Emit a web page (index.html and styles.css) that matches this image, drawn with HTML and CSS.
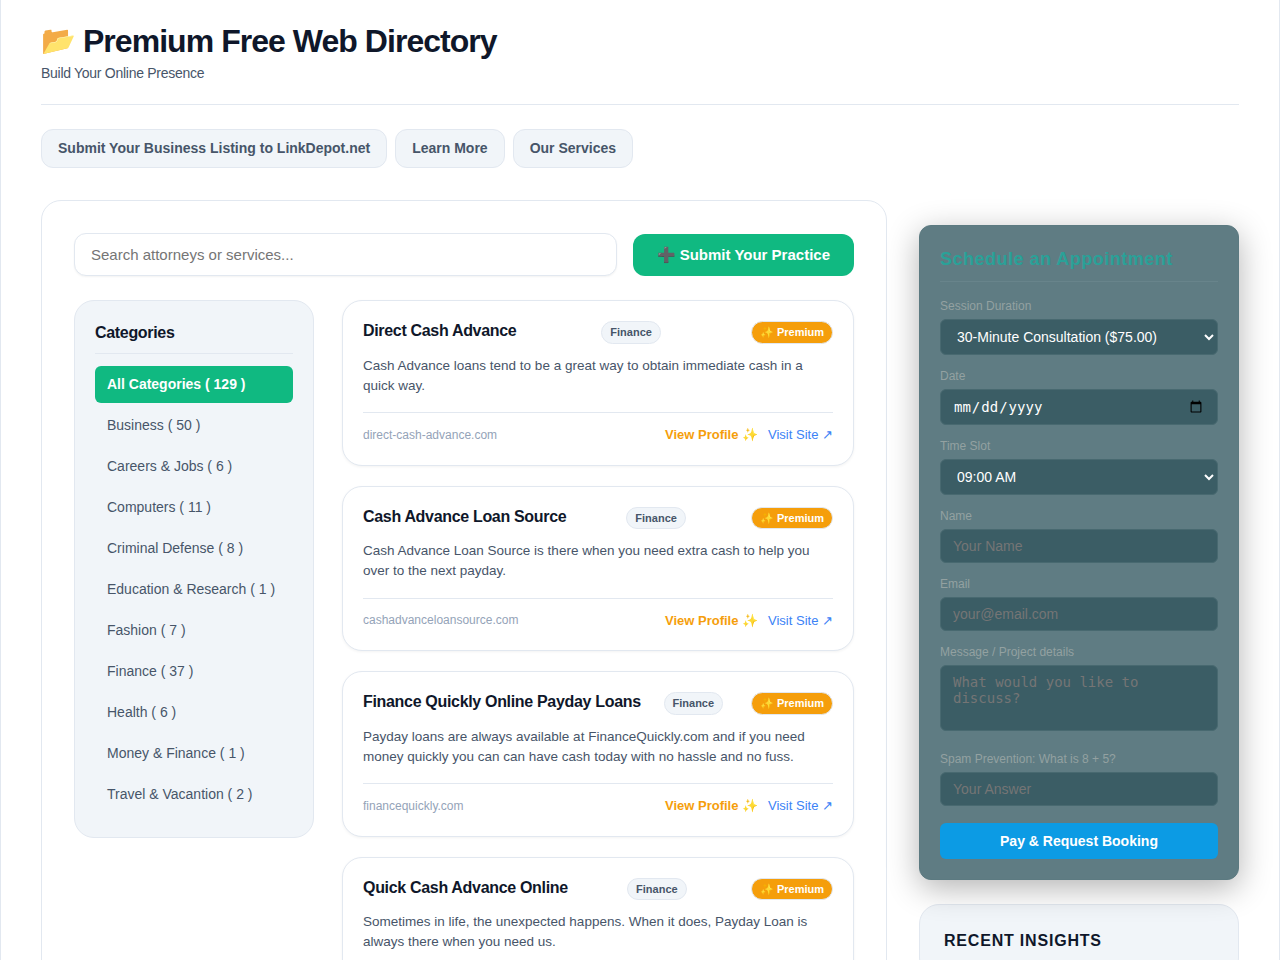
FILE: index.html
```html
<!DOCTYPE html>
<html lang="en">
<head>
    <meta charset="UTF-8">
    <meta name="viewport" content="width=device-width, initial-scale=1.0">
    <title>Premium Free Web Directory</title>
    <link rel="stylesheet" href="styles.css">
</head>
<body>
    <div class="container">
        <header class="site-header">
            <h1><span class="logo">📂</span> Premium Free Web Directory</h1>
            <p class="tagline">Build Your Online Presence</p>
        </header>
        <nav class="site-nav">
            <a href="#">Submit Your Business Listing to LinkDepot.net</a>
            <a href="#">Learn More</a>
            <a href="#">Our Services</a>
        </nav>

        <div class="layout">
            <main class="content">
                <div class="search-row">
                    <input type="text" class="search-input" placeholder="Search attorneys or services...">
                    <button class="btn-submit">➕ Submit Your Practice</button>
                </div>

                <div class="directory">
                    <div class="categories">
                        <h3>Categories</h3>
                        <ul>
                            <li><a href="#" class="active">All Categories ( 129 )</a></li>
                            <li><a href="#">Business ( 50 )</a></li>
                            <li><a href="#">Careers &amp; Jobs ( 6 )</a></li>
                            <li><a href="#">Computers ( 11 )</a></li>
                            <li><a href="#">Criminal Defense ( 8 )</a></li>
                            <li><a href="#">Education &amp; Research ( 1 )</a></li>
                            <li><a href="#">Fashion ( 7 )</a></li>
                            <li><a href="#">Finance ( 37 )</a></li>
                            <li><a href="#">Health ( 6 )</a></li>
                            <li><a href="#">Money &amp; Finance ( 1 )</a></li>
                            <li><a href="#">Travel &amp; Vacantion ( 2 )</a></li>
                        </ul>
                    </div>

                    <div class="listings">
                        <div class="card">
                            <div class="card-header">
                                <h2>Direct Cash Advance</h2>
                                <span class="badge">Finance</span>
                                <span class="badge premium">✨ Premium</span>
                            </div>
                            <p>Cash Advance loans tend to be a great way to obtain immediate cash in a quick way.</p>
                            <div class="card-footer">
                                <span class="domain">direct-cash-advance.com</span>
                                <div class="links">
                                    <a href="#" class="profile">View Profile ✨</a>
                                    <a href="#" class="visit">Visit Site ↗</a>
                                </div>
                            </div>
                        </div>
                        <div class="card">
                            <div class="card-header">
                                <h2>Cash Advance Loan Source</h2>
                                <span class="badge">Finance</span>
                                <span class="badge premium">✨ Premium</span>
                            </div>
                            <p>Cash Advance Loan Source is there when you need extra cash to help you over to the next payday.</p>
                            <div class="card-footer">
                                <span class="domain">cashadvanceloansource.com</span>
                                <div class="links">
                                    <a href="#" class="profile">View Profile ✨</a>
                                    <a href="#" class="visit">Visit Site ↗</a>
                                </div>
                            </div>
                        </div>
                        <div class="card">
                            <div class="card-header">
                                <h2>Finance Quickly Online Payday Loans</h2>
                                <span class="badge">Finance</span>
                                <span class="badge premium">✨ Premium</span>
                            </div>
                            <p>Payday loans are always available at FinanceQuickly.com and if you need money quickly you can can have cash today with no hassle and no fuss.</p>
                            <div class="card-footer">
                                <span class="domain">financequickly.com</span>
                                <div class="links">
                                    <a href="#" class="profile">View Profile ✨</a>
                                    <a href="#" class="visit">Visit Site ↗</a>
                                </div>
                            </div>
                        </div>
                        <div class="card">
                            <div class="card-header">
                                <h2>Quick Cash Advance Online</h2>
                                <span class="badge">Finance</span>
                                <span class="badge premium">✨ Premium</span>
                            </div>
                            <p>Sometimes in life, the unexpected happens. When it does, Payday Loan is always there when you need us.</p>
                        </div>
                    </div>
                </div>
            </main>

            <aside class="sidebar">
                <form class="booking">
                    <h3>Schedule an Appointment</h3>
                    <div class="field">
                        <label for="duration">Session Duration</label>
                        <select id="duration">
                            <option>30-Minute Consultation ($75.00)</option>
                        </select>
                    </div>
                    <div class="field">
                        <label for="date">Date</label>
                        <input type="date" id="date">
                    </div>
                    <div class="field">
                        <label for="slot">Time Slot</label>
                        <select id="slot">
                            <option>09:00 AM</option>
                        </select>
                    </div>
                    <div class="field">
                        <label for="name">Name</label>
                        <input type="text" id="name" placeholder="Your Name">
                    </div>
                    <div class="field">
                        <label for="email">Email</label>
                        <input type="email" id="email" placeholder="your@email.com">
                    </div>
                    <div class="field">
                        <label for="message">Message / Project details</label>
                        <textarea id="message" rows="3" placeholder="What would you like to discuss?"></textarea>
                    </div>
                    <div class="field">
                        <label for="answer">Spam Prevention: What is 8 + 5?</label>
                        <input type="text" id="answer" placeholder="Your Answer">
                    </div>
                    <button type="button" class="btn-book">Pay &amp; Request Booking</button>
                </form>

                <div class="insights">
                    <h3>Recent Insights</h3>
                </div>
            </aside>
        </div>
    </div>
</body>
</html>
```
FILE: styles.css
```css
:root {
    --border: #e2e8f0;
    --surface: #f1f5f9;
    --text-main: #0f172a;
    --text-muted: #475569;
    --accent: #10b981;
    --premium: #f59e0b;
}

* {
    box-sizing: border-box;
    margin: 0;
    padding: 0;
}
body {
    font-family: "Liberation Sans", Arial, sans-serif;
    line-height: 1.5;
    color: var(--text-main);
    background-color: #fff;
    height: 960px;
    overflow: hidden;
}
a {
    text-decoration: none;
}
.container {
    min-height: 960px;
    padding: 24px 40px 0;
    border-left: 1px solid var(--border);
    border-right: 1px solid var(--border);
}

/* Header */
.site-header {
    padding-bottom: 20px;
    margin-bottom: 24px;
    border-bottom: 1px solid var(--border);
}
.site-header h1 {
    font-size: 32px;
    line-height: 1.1;
    letter-spacing: -0.03em;
    margin-bottom: 4px;
}
.logo {
    font-size: 28px;
    line-height: 1;
    vertical-align: 2px;
}
.tagline {
    font-size: 14px;
    letter-spacing: -0.02em;
    color: var(--text-muted);
}
.site-nav {
    display: flex;
    gap: 8px;
    margin-bottom: 32px;
}
.site-nav a {
    font-size: 14px;
    font-weight: bold;
    color: var(--text-muted);
    background-color: var(--surface);
    border: 1px solid var(--border);
    border-radius: 12px;
    padding: 8px 16px;
}

/* Main area */
.layout {
    display: grid;
    grid-template-columns: minmax(0, 1fr) 320px;
    gap: 32px;
}
.content {
    border: 1px solid var(--border);
    border-radius: 20px;
    padding: 32px;
}
.search-row {
    display: flex;
    align-items: center;
    gap: 16px;
    margin-bottom: 24px;
}
.search-input {
    flex: 1;
    height: 43px;
    padding: 12px 16px;
    font-family: inherit;
    font-size: 15px;
    border: 1px solid var(--border);
    border-radius: 12px;
    box-shadow: 0 1px 2px rgba(0, 0, 0, 0.05);
}
.btn-submit {
    height: 42px;
    padding: 0 24px;
    font-family: inherit;
    font-size: 15px;
    font-weight: bold;
    color: #fff;
    background-color: var(--accent);
    border: none;
    border-radius: 12px;
}
.directory {
    display: grid;
    grid-template-columns: 240px minmax(0, 1fr);
    gap: 28px;
    align-items: start;
}
.categories {
    padding: 20px;
    background-color: var(--surface);
    border: 1px solid var(--border);
    border-radius: 20px;
}
.categories h3 {
    font-size: 16px;
    letter-spacing: -0.02em;
    padding-bottom: 8px;
    margin-bottom: 12px;
    border-bottom: 1px solid var(--border);
}
.categories ul {
    list-style: none;
}
.categories li {
    margin-bottom: 4px;
}
.categories a {
    display: block;
    padding: 8px 12px;
    font-size: 14px;
    color: var(--text-muted);
    border-radius: 6px;
}
.categories a.active {
    font-weight: bold;
    color: #fff;
    background-color: var(--accent);
}

/* Listing cards */
.listings {
    display: flex;
    flex-direction: column;
    gap: 20px;
}
.card {
    padding: 20px;
    background-color: #fff;
    border: 1px solid var(--border);
    border-radius: 20px;
    box-shadow: 0 1px 3px rgba(0, 0, 0, 0.05);
}
.card-header {
    display: flex;
    justify-content: space-between;
    align-items: flex-start;
    margin-bottom: 12px;
}
.card h2 {
    font-size: 16px;
    line-height: 1.3;
    letter-spacing: -0.02em;
}
.badge {
    font-size: 11px;
    font-weight: bold;
    color: var(--text-muted);
    background-color: var(--surface);
    border: 1px solid var(--border);
    border-radius: 20px;
    padding: 2px 8px;
    white-space: nowrap;
}
.badge.premium {
    color: #fff;
    background-color: var(--premium);
    margin-left: 5px;
}
.card p {
    font-size: 13.5px;
    color: var(--text-muted);
    margin-bottom: 16px;
}
.card-footer {
    display: flex;
    justify-content: space-between;
    align-items: center;
    padding-top: 12px;
    border-top: 1px solid var(--border);
}
.domain {
    font-size: 12px;
    color: #94a3b8;
}
.links {
    display: flex;
    gap: 10px;
    font-size: 13px;
}
.profile {
    font-weight: bold;
    color: var(--premium);
}
.visit {
    color: #3b82f6;
}

/* Booking form */
.sidebar {
    padding-top: 25px;
}
.booking {
    position: relative;
    padding: 20px;
    margin-bottom: 24px;
    background-color: #5f7c83;
    border: 1px solid #5c7a81;
    border-radius: 12px;
    box-shadow: 0 8px 32px rgba(0, 0, 0, 0.3);
}
.booking h3 {
    font-size: 18px;
    letter-spacing: 0.5px;
    color: #2aa198;
    padding-bottom: 8px;
    margin-bottom: 15px;
    border-bottom: 1px solid #68848b;
}
.field {
    margin-bottom: 12px;
}
.field label {
    display: block;
    font-size: 12px;
    color: #93a1a1;
    margin-bottom: 4px;
}
.field input, .field select, .field textarea {
    width: 100%;
    padding: 8px 12px;
    font-size: 14px;
    color: #fff;
    background-color: #3b5d65;
    border: 1px solid #486970;
    border-radius: 6px;
}
.field textarea {
    resize: none;
}
.btn-book {
    width: 100%;
    height: 36px;
    margin-top: 5px;
    font-size: 14px;
    font-weight: bold;
    color: #fff;
    background-color: #0c9be4;
    border: none;
    border-radius: 6px;
}
.insights {
    padding: 24px;
    background-color: var(--surface);
    border: 1px solid var(--border);
    border-radius: 20px;
}
.insights h3 {
    font-size: 16px;
    letter-spacing: 0.05em;
    text-transform: uppercase;
}
```
